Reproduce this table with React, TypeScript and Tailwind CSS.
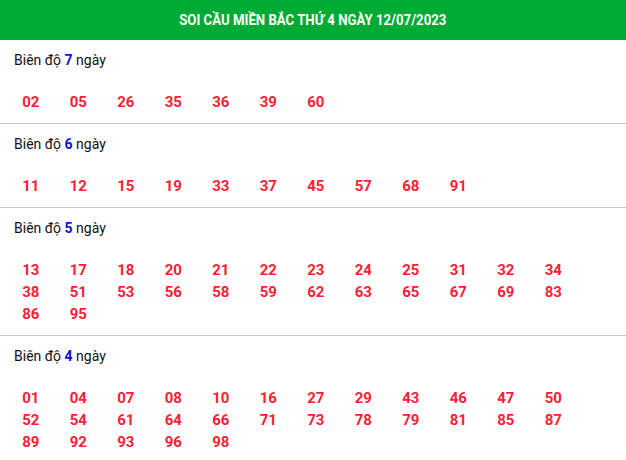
const sections: { days: number; nums: string[] }[] = [
  { days: 7, nums: ["02", "05", "26", "35", "36", "39", "60"] },
  { days: 6, nums: ["11", "12", "15", "19", "33", "37", "45", "57", "68", "91"] },
  {
    days: 5,
    nums: ["13", "17", "18", "20", "21", "22", "23", "24", "25", "31", "32", "34", "38", "51", "53", "56", "58", "59", "62", "63", "65", "67", "69", "83", "86", "95"],
  },
  {
    days: 4,
    nums: ["01", "04", "07", "08", "10", "16", "27", "29", "43", "46", "47", "50", "52", "54", "61", "64", "66", "71", "73", "78", "79", "81", "85", "87", "89", "92", "93", "96", "98"],
  },
];

export default function App() {
  return (
    <div className="h-[460px] w-[626px] overflow-hidden bg-white font-['Roboto',sans-serif]">
      <div className="flex h-10 items-center justify-center bg-[#00ab35]">
        <h1 className="origin-center scale-x-[0.88] whitespace-nowrap text-[15px] font-bold text-white">
          SOI CẦU MIỀN BẮC THỨ 4 NGÀY 12/07/2023
        </h1>
      </div>

      {sections.map((s, i) => (
        <div key={s.days} className={i < sections.length - 1 ? "border-b border-[#c6c6c6]" : ""}>
          <div className="px-[14px] pt-[11px] text-[14px] leading-[18px] text-[#111]">
            Biên độ <b className="font-bold text-[#1010d0]">{s.days}</b> ngày
          </div>
          <div className="grid grid-cols-[repeat(12,47.5px)] pl-[7px] pt-[22px] pb-[10px]">
            {s.nums.map((n) => (
              <span key={n} className="text-center text-[15px] font-bold leading-[22px] text-[#fd2035]">
                {n}
              </span>
            ))}
          </div>
        </div>
      ))}
    </div>
  );
}
